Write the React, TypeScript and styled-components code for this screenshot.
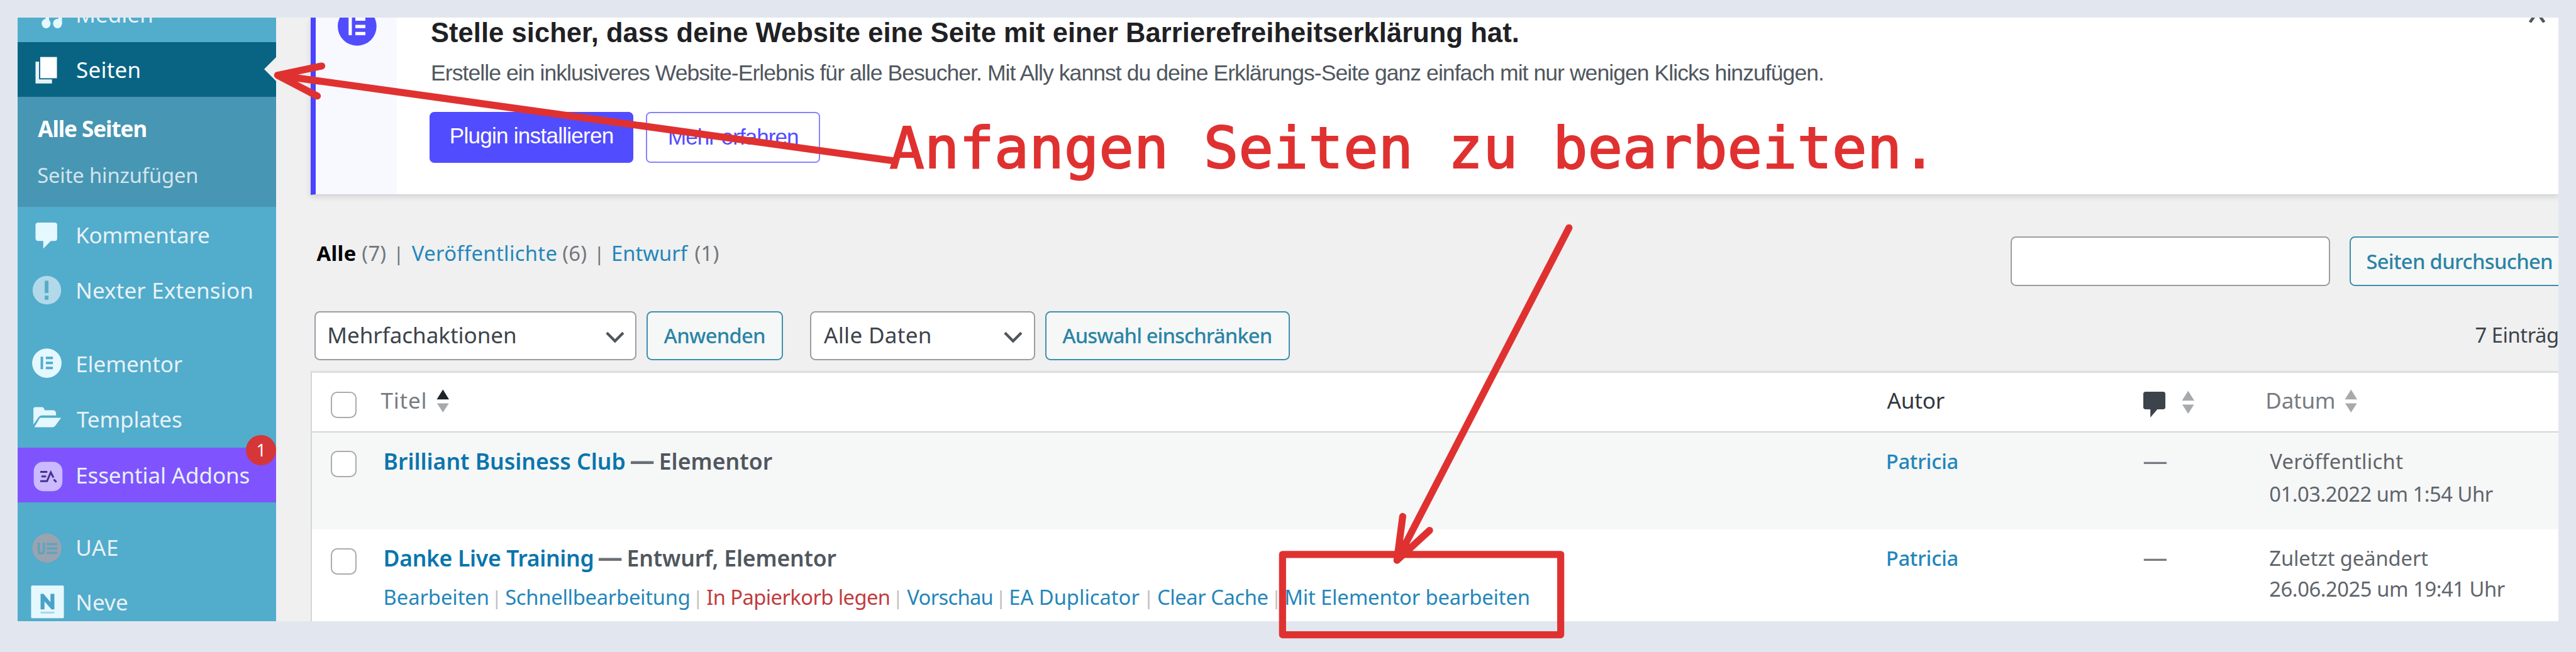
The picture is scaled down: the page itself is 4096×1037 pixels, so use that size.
import React, { useMemo } from 'react';
import styled, { createGlobalStyle, css } from 'styled-components';

/* One design unit in CSS pixels: the board is 4380 units wide. */
const UNIT = 4096 / 4380;
const u = (n: number) => `${+(n * UNIT).toFixed(3)}px`;

const UI = '"Noto Sans", "Open Sans", sans-serif';
const SANS = '"Liberation Sans", Arial, sans-serif';
const HAND = '"DejaVu Sans Mono", monospace';

const color = {
  board: '#e2e7ef',
  menu: '#52accc',
  menuText: '#e8f2f6',
  menuIcon: '#e5f8ff',
  current: '#096484',
  submenu: '#4796b3',
  purple: '#7f54ff',
  badge: '#d63638',
  page: '#f0f0f0',
  brand: '#524cff',
  link: '#2486ba',
  titleLink: '#0a75ad',
  line: '#d3d5d8',
  field: '#9a9da3',
  button: '#2a84a6',
  text: '#3c434a',
  muted: '#50575e',
  marker: '#e03131',
};

const GlobalStyle = createGlobalStyle`
  * { box-sizing: border-box; }
  html, body { margin: 0; padding: 0; }
  body { background: ${color.board}; overflow: hidden; }
`;

/* ---------- text set to a measured width ---------- */

const Box = styled.span<{ $w: number; $size: number; $weight: number; $color: string; $family: string }>`
  display: inline-block;
  flex: none;
  width: ${p => u(p.$w)};
  font-family: ${p => p.$family};
  font-size: ${p => u(p.$size)};
  font-weight: ${p => p.$weight};
  color: ${p => p.$color};
  line-height: ${u(50)};
  white-space: nowrap;
  font-variant-ligatures: none;
`;

const Glyphs = styled.span`
  display: inline-block;
`;

let pen: CanvasRenderingContext2D | null = null;

type LabelProps = {
  children: string;
  w: number;
  size?: number;
  weight?: number;
  tone?: string;
  family?: string;
};

function Label({ children, w, size = 35, weight = 400, tone = color.text, family = UI }: LabelProps) {
  const fit = useMemo(() => {
    pen = pen || document.createElement('canvas').getContext('2d');
    if (!pen) return {};
    pen.font = `${weight} ${size * UNIT}px ${family}`;
    const m = pen.measureText(children);
    const ink = m.actualBoundingBoxLeft + m.actualBoundingBoxRight;
    const stem = m.actualBoundingBoxLeft < -1.5 ? 1.6 : 0.4;
    return {
      letterSpacing: `${(w * UNIT - stem - ink) / Math.max(1, children.length - 1)}px`,
      marginLeft: `${m.actualBoundingBoxLeft + stem}px`,
    };
  }, [children, w, size, weight, family]);
  return (
    <Box $w={w} $size={size} $weight={weight} $color={tone} $family={family}>
      <Glyphs style={fit}>{children}</Glyphs>
    </Box>
  );
}

/* ---------- board ---------- */

const Board = styled.div`
  position: relative;
  width: 4096px;
  height: 1037px;
  padding: ${u(30)};
  background: ${color.board};
  overflow: hidden;
`;

const Shot = styled.div`
  display: flex;
  width: ${u(4320)};
  height: ${u(1026.4)};
  overflow: hidden;
  background: ${color.page};
`;

/* ---------- side menu ---------- */

const Menu = styled.nav`
  flex: none;
  width: ${u(439.5)};
  height: 100%;
  background: ${color.menu};
`;

const MenuScroll = styled.div`
  margin-top: ${u(-52)};
`;

const MenuItem = styled.div<{ $bg?: string; $h?: number; $gap?: number }>`
  position: relative;
  display: flex;
  align-items: center;
  gap: ${u(20)};
  height: ${p => u(p.$h || 94)};
  margin-top: ${p => u(p.$gap || 0)};
  padding: ${u(1)} 0 0 ${u(22)};
  background: ${p => p.$bg || 'transparent'};
`;

const MenuIcon = styled.svg`
  flex: none;
  width: ${u(58)};
  height: ${u(94)};
  margin-top: ${u(-1)};
`;

const Notch = styled.span`
  position: absolute;
  right: 0;
  top: ${u(25)};
  border: ${u(20.5)} solid transparent;
  border-right-color: ${color.page};
  border-left-width: 0;
`;

const Submenu = styled.div`
  display: flex;
  flex-direction: column;
  height: ${u(187)};
  padding: ${u(30)} 0 0 ${u(34)};
  gap: ${u(29)};
  background: ${color.submenu};
`;

const Badge = styled.span`
  position: absolute;
  right: 0;
  top: ${u(-21)};
  display: flex;
  align-items: center;
  justify-content: center;
  width: ${u(51)};
  height: ${u(51)};
  border-radius: 50%;
  background: ${color.badge};
  color: #fff;
  font: 400 ${u(29)} ${UI};
`;

const ic = color.menuIcon;

const MusicIcon = () => (
  <MenuIcon viewBox="0 0 58 94">
    <path d="M18 28h35v35h-6V36H31v27h-6V28z" fill={ic} />
    <ellipse cx="26" cy="62.5" rx="7.6" ry="8" fill={ic} />
    <ellipse cx="45.4" cy="62.5" rx="7.6" ry="8" fill={ic} />
  </MenuIcon>
);
const PagesIcon = () => (
  <MenuIcon viewBox="0 0 58 93">
    <path d="M8 32.6h6v30.2h22v7H8z" fill="#e8f3f7" />
    <path d="M16 24.8h28.4v36.1H16z" fill="#fff" />
  </MenuIcon>
);
const CommentIcon = () => (
  <MenuIcon viewBox="0 0 58 94">
    <path d="M12.500 25.600h28a4.300 4.300 0 0 1 4.300 4.300v22.800a4.300 4.300 0 0 1-4.300 4.300H34L21.200 70V57h-8.700A4.300 4.300 0 0 1 8 52.700V29.900a4.300 4.300 0 0 1 4.500-4.300z" fill={ic} />
  </MenuIcon>
);
const NexterIcon = () => (
  <MenuIcon viewBox="0 0 58 94">
    <circle cx="27.300" cy="46.600" r="24.300" fill="#b1d9ea" />
    <path d="M23.600 30.500h6.400v20.800h-6.400zM23.600 56h6.400v6.800h-6.400z" fill="#58abc9" />
  </MenuIcon>
);
const ElementorIcon = () => (
  <MenuIcon viewBox="0 0 58 94">
    <circle cx="27.300" cy="45.500" r="25" fill={ic} />
    <path d="M16.600 34.400h4.300v21.500h-4.300zM25.500 34.400h12.100v4.300H25.500zM25.500 43h12.100v4.300H25.500zM25.500 51.600h12.100v4.300H25.500z" fill={color.menu} />
  </MenuIcon>
);
const FolderIcon = () => (
  <MenuIcon viewBox="0 0 58 94">
    <path d="M4.400 56V29.500q0-3.400 3.400-3.400h10.800q4 0 5 5.500h14q5 0 5.300 5.500v3.300H19q-4 0-6.600 4z" fill={ic} />
    <path d="M15.500 44.300H51.500L41.500 58q-1.700 2.400-4.500 2.400H6z" fill={ic} />
  </MenuIcon>
);
const EssentialIcon = () => (
  <MenuIcon viewBox="0 0 58 94">
    <rect x="5" y="24" width="48.700" height="50" rx="16" fill="#cbbaff" />
    <g fill="none" stroke="#45308f" strokeWidth="3.200">
      <path d="M16 41.300h12M18 49h8M16 57h11.500L34 42l4.500 9" />
      <path d="M39 54l4.500 4.500" />
    </g>
  </MenuIcon>
);
const UaeIcon = () => (
  <MenuIcon viewBox="0 0 58 94">
    <circle cx="27.300" cy="47.800" r="24.800" fill="#9aa3b0" />
    <g fill="none" stroke="#62a3be" strokeWidth="4">
      <path d="M13.500 38.500v14q0 4.500 4.300 4.500t4.300-4.500v-14" />
      <path d="M27 41h18M27 48.500h18M27 56h18" />
    </g>
  </MenuIcon>
);
const NeveIcon = () => (
  <MenuIcon viewBox="0 0 58 94">
    <rect x="0.500" y="18.400" width="55.700" height="55.700" rx="2" fill={ic} />
    <path d="M16.600 59.100V32.700h5l11.800 14V32.700h6.700v26.400h-5L23.300 45.500v13.600z" fill="#48a3c6" />
    <path d="M16.600 63h23.500v3H16.600z" fill="#a5d6e8" />
  </MenuIcon>
);

function MenuLabel({ children, w }: { children: string; w: number }) {
  return <Label w={w} size={37.5} tone={color.menuText}>{children}</Label>;
}

function SideMenu() {
  return (
    <Menu>
      <MenuScroll>
        <MenuItem><MusicIcon /><MenuLabel w={128}>Medien</MenuLabel></MenuItem>
        <MenuItem $bg={color.current} $h={93}>
          <PagesIcon />
          <Label w={107} size={37.5} tone="#fff">Seiten</Label>
          <Notch />
        </MenuItem>
        <Submenu>
          <Label w={184.6} size={37.5} weight={700} tone="#fff">Alle Seiten</Label>
          <Label w={271} tone="#d3e5ec">Seite hinzufügen</Label>
        </Submenu>
        <MenuItem $gap={1}><CommentIcon /><MenuLabel w={225}>Kommentare</MenuLabel></MenuItem>
        <MenuItem><NexterIcon /><MenuLabel w={298}>Nexter Extension</MenuLabel></MenuItem>
        <MenuItem $gap={31}><ElementorIcon /><MenuLabel w={180}>Elementor</MenuLabel></MenuItem>
        <MenuItem><FolderIcon /><MenuLabel w={179}>Templates</MenuLabel></MenuItem>
        <MenuItem $gap={1} $bg={color.purple}>
          <EssentialIcon />
          <MenuLabel w={294}>Essential Addons</MenuLabel>
          <Badge>1</Badge>
        </MenuItem>
        <MenuItem $gap={29}><UaeIcon /><MenuLabel w={70}>UAE</MenuLabel></MenuItem>
        <MenuItem><NeveIcon /><MenuLabel w={86}>Neve</MenuLabel></MenuItem>
      </MenuScroll>
    </Menu>
  );
}

/* ---------- notice ---------- */

const Content = styled.main`
  flex: 1;
  min-width: 0;
  padding-left: ${u(59)};
`;

const Notice = styled.section`
  display: flex;
  height: ${u(301)};
  background: #fff;
  border-left: ${u(9)} solid #4a43ff;
  border-bottom: ${u(2)} solid #d0d3d7;
  box-shadow: 0 ${u(4)} ${u(10)} rgba(0, 0, 0, 0.13);
`;

const NoticeAside = styled.div`
  flex: none;
  width: ${u(137.5)};
  background: #f8f8ff;
`;

const NoticeLogo = styled.svg`
  display: block;
  margin: ${u(-18)} 0 0 ${u(37.4)};
  width: ${u(66)};
  height: ${u(66)};
`;

const NoticeBody = styled.div`
  flex: 1;
  display: flex;
  flex-direction: column;
  padding: ${u(1)} 0 0 ${u(58.5)};
`;

const NoticeText = styled.div`
  height: ${u(50)};
  margin-top: ${u(18.7)};
`;

const NoticeTitle = styled.div`
  height: ${u(50)};
`;

const Actions = styled.div`
  display: flex;
  gap: ${u(22)};
  margin: ${u(40.4)} 0 0 ${u(-2.5)};
`;

const NoticeButton = styled.button<{ $w: number; $solid?: boolean }>`
  display: flex;
  align-items: center;
  justify-content: center;
  width: ${p => u(p.$w)};
  height: ${u(86.5)};
  padding: 0 0 ${p => u(p.$solid ? 4 : 0)};
  border: ${u(2.8)} solid ${p => (p.$solid ? color.brand : '#8782ff')};
  border-radius: ${u(8)};
  background: ${p => (p.$solid ? color.brand : '#fff')};
`;

const Dismiss = styled.svg`
  flex: none;
  width: ${u(28)};
  height: ${u(8)};
  margin-right: ${u(22)};
`;

function AllyNotice() {
  return (
    <Notice>
      <NoticeAside>
        <NoticeLogo viewBox="0 0 66 66">
          <circle cx="33" cy="33" r="33" fill={color.brand} />
          <path d="M18.500 18h5.500v30h-5.500zM30 18h17v5.500H30zM30 30.500h17V36H30zM30 42.500h17V48H30z" fill="#fff" />
        </NoticeLogo>
      </NoticeAside>
      <NoticeBody>
        <NoticeTitle>
          <Label w={1848} size={46.5} weight={700} tone="#1f2124" family={SANS}>
            Stelle sicher, dass deine Website eine Seite mit einer Barrierefreiheitserklärung hat.
          </Label>
        </NoticeTitle>
        <NoticeText>
          <Label w={2368} size={38} tone="#50575e" family={SANS}>
            Erstelle ein inklusiveres Website-Erlebnis für alle Besucher. Mit Ally kannst du deine Erklärungs-Seite ganz einfach mit nur wenigen Klicks hinzufügen.
          </Label>
        </NoticeText>
        <Actions>
          <NoticeButton $w={346} $solid>
            <Label w={277.5} size={37.5} tone="#fff" family={SANS}>Plugin installieren</Label>
          </NoticeButton>
          <NoticeButton $w={296}>
            <Label w={221} size={37.5} tone={color.brand} family={SANS}>Mehr erfahren</Label>
          </NoticeButton>
        </Actions>
      </NoticeBody>
      <Dismiss viewBox="0 0 28 8">
        <path d="M2 8L9 -2M26 8L19 -2" stroke="#50575e" strokeWidth="5" fill="none" />
      </Dismiss>
    </Notice>
  );
}

/* ---------- list controls ---------- */

const TopBar = styled.div`
  display: flex;
  justify-content: space-between;
  align-items: flex-start;
  height: ${u(85)};
  margin-top: ${u(71)};
`;

const Views = styled.div`
  display: flex;
  padding: ${u(4.6)} 0 0 ${u(9.4)};
  gap: ${u(11)};
`;

const ViewBar = styled.span`
  width: ${u(22)};
  text-align: center;
  font: 400 ${u(34)}/${u(50)} ${UI};
  color: #72777c;
`;

const Search = styled.div`
  display: flex;
  flex: none;
  gap: ${u(33.2)};
  width: ${u(931.7)};
`;

const control = css`
  flex: none;
  border-radius: ${u(9)};
  border: ${u(2.8)} solid ${color.field};
  background: #fff;
`;

const SearchInput = styled.input`
  ${control}
  width: ${u(543.3)};
  height: ${u(85)};
`;

const Button = styled.button<{ $w: number; $h?: number }>`
  ${control}
  display: flex;
  align-items: center;
  width: ${p => u(p.$w)};
  height: ${p => u(p.$h || 83.5)};
  padding: ${u(1.5)} 0 0 ${u(27)};
  border-color: #3f8fac;
  background: #f6f7f7;
`;

const Filters = styled.div`
  display: flex;
  align-items: center;
  height: ${u(83.5)};
  margin-top: ${u(41.9)};
  padding-left: ${u(6.2)};
  gap: ${u(16.5)};
`;

const Select = styled.div<{ $w: number; $left?: number }>`
  ${control}
  display: flex;
  align-items: center;
  justify-content: space-between;
  width: ${p => u(p.$w)};
  height: ${u(83.5)};
  margin-left: ${p => u(p.$left || 0)};
  padding: 0 ${u(18)} 0 ${u(21)};
`;

const Chevron = styled.svg`
  width: ${u(34)};
  height: ${u(20)};
  margin-top: ${u(6)};
`;

const Count = styled.div`
  margin-left: auto;
  padding-right: ${u(1)};
`;

const Arrow = () => (
  <Chevron viewBox="0 0 34 20">
    <path d="M3 2.500L17 16.500L31 2.500" fill="none" stroke="#50555b" strokeWidth="4.600" />
  </Chevron>
);

function ListControls() {
  return (
    <>
      <TopBar>
        <Views>
          <Label w={67} weight={700} tone="#000">Alle</Label>
          <Label w={40} tone="#72777c">(7)</Label>
          <ViewBar>|</ViewBar>
          <Label w={246} tone={color.link}>Veröffentlichte</Label>
          <Label w={40} tone="#72777c">(6)</Label>
          <ViewBar>|</ViewBar>
          <Label w={130} tone={color.link}>Entwurf</Label>
          <Label w={40} tone="#72777c">(1)</Label>
        </Views>
        <Search>
          <SearchInput />
          <Button $w={385} $h={85}>
            <Label w={314.5} tone={color.button} weight={500}>Seiten durchsuchen</Label>
          </Button>
        </Search>
      </TopBar>
      <Filters>
        <Select $w={548}>
          <Label w={318} size={37.5}>Mehrfachaktionen</Label>
          <Arrow />
        </Select>
        <Button $w={232.6}>
          <Label w={171} tone={color.button} weight={500}>Anwenden</Label>
        </Button>
        <Select $w={383} $left={29}>
          <Label w={181} size={37.5}>Alle Daten</Label>
          <Arrow />
        </Select>
        <Button $w={416.7}>
          <Label w={355} tone={color.button} weight={500}>Auswahl einschränken</Label>
        </Button>
        <Count><Label w={140}>7 Einträg</Label></Count>
      </Filters>
    </>
  );
}

/* ---------- table ---------- */

const Table = styled.div`
  margin-top: ${u(18.9)};
  border-left: ${u(2.7)} solid ${color.line};
  border-top: ${u(4)} solid #dcdddf;
  background: #fff;
`;

const Row = styled.div<{ $h: number; $bg?: string; $head?: boolean }>`
  display: grid;
  grid-template-columns: ${u(116.4)} ${u(2561.2)} ${u(436.4)} ${u(209)} 1fr;
  align-items: start;
  height: ${p => u(p.$h)};
  background: ${p => p.$bg || '#fff'};
  border-bottom: ${p => (p.$head ? u(3) : '0')} solid ${color.line};
`;

const Cell = styled.div<{ $top: number; $left?: number }>`
  display: flex;
  align-items: center;
  padding: ${p => u(p.$top)} 0 0 ${p => u(p.$left || 0)};
`;

const Stack = styled.div<{ $top: number; $left: number; $gap: number }>`
  display: flex;
  flex-direction: column;
  padding: ${p => u(p.$top)} 0 0 ${p => u(p.$left)};
  gap: ${p => u(p.$gap)};
`;

const Line = styled.div`
  display: flex;
  height: ${u(50)};
`;

const Checkbox = styled.span`
  width: ${u(44)};
  height: ${u(45)};
  margin: ${u(31.5)} 0 0 ${u(31.7)};
  border: ${u(2.8)} solid #a9abaf;
  border-radius: ${u(11)};
  background: #fff;
`;

const SortSvg = styled.svg<{ $left: number }>`
  width: ${u(22)};
  height: ${u(40)};
  margin: ${u(1)} 0 0 ${p => u(p.$left)};
`;

const Sort = ({ left, active }: { left: number; active?: boolean }) => (
  <SortSvg $left={left} viewBox="0 0 22 40">
    <path d="M0.500 17.500L11 0.500L21.500 17.500z" fill={active ? '#1d2327' : '#a7aaad'} />
    <path d="M1 24L11 39.500L21 24z" fill="#a7aaad" />
  </SortSvg>
);

const CommentSvg = styled.svg`
  width: ${u(38)};
  height: ${u(46)};
  margin-top: ${u(8)};
`;

const Dash = styled.span<{ $bold?: boolean }>`
  width: ${p => u(p.$bold ? 59.5 : 40)};
  margin-left: ${p => u(p.$bold ? 0 : -1)};
  text-align: center;
  font: ${p => (p.$bold ? 700 : 400)} ${u(42)}/${u(46)} ${UI};
  color: ${p => (p.$bold ? '#6a6f75' : '#787c82')};
`;

const ActionBar = styled.span`
  width: ${u(30)};
  text-align: center;
  font: 400 ${u(34)}/${u(50)} ${UI};
  color: #c3c0bf;
`;

type PageRow = {
  title: string;
  titleW: number;
  state: string;
  stateW: number;
  date: [string, number][];
  dateTop: number;
  dateGap: number;
  actions?: [string, number][];
};

const pages: PageRow[] = [
  {
    title: 'Brilliant Business Club', titleW: 409, state: 'Elementor', stateW: 191,
    date: [['Veröffentlicht', 227], ['01.03.2022 um 1:54 Uhr', 380.5]], dateTop: 24.5, dateGap: 5.6,
  },
  {
    title: 'Danke Live Training', titleW: 354.4, state: 'Entwurf, Elementor', stateW: 354.5,
    date: [['Zuletzt geändert', 270], ['26.06.2025 um 19:41 Uhr', 401]], dateTop: 24.9, dateGap: 2.5,
    actions: [
      ['Bearbeiten', 176.2], ['Schnellbearbeitung', 312.2], ['In Papierkorb legen', 310.2],
      ['Vorschau', 145.1], ['EA Duplicator', 221.1], ['Clear Cache', 187.3], ['Mit Elementor bearbeiten', 414],
    ],
  },
];

function PagesTable() {
  return (
    <Table>
      <Row $h={101} $head>
        <Checkbox />
        <Cell $top={22.5}>
          <Label w={76.5} size={37.5} tone="#787c82">Titel</Label>
          <Sort left={18.5} active />
        </Cell>
        <Cell $top={22.5}><Label w={98} size={37.5} tone="#32373c">Autor</Label></Cell>
        <Cell $top={22.5}>
          <CommentSvg viewBox="0 0 38 46">
            <path d="M4 1h29.500a4 4 0 0 1 4 4v22a4 4 0 0 1-4 4H24L12 45V31H4a4 4 0 0 1-4-4V5a4 4 0 0 1 4-4z" fill="#3c434a" />
          </CommentSvg>
          <Sort left={27} />
        </Cell>
        <Cell $top={22.5}>
          <Label w={114.5} size={37.5} tone="#787c82">Datum</Label>
          <Sort left={18.5} />
        </Cell>
      </Row>
      {pages.map((p, i) => (
        <Row key={p.title} $h={165} $bg={i % 2 ? '#fff' : '#f6f7f7'}>
          <Checkbox />
          <Stack $top={23.5} $left={6.3} $gap={17.4}>
            <Line>
              <Label w={p.titleW} size={38} weight={600} tone={color.titleLink}>{p.title}</Label>
              <Dash $bold>—</Dash>
              <Label w={p.stateW} size={38} weight={600} tone={color.muted}>{p.state}</Label>
            </Line>
            {p.actions && (
              <Line>
                {p.actions.map(([name, w], k) => (
                  <React.Fragment key={name}>
                    {k > 0 && <ActionBar>|</ActionBar>}
                    <Label w={w} tone={k === 2 ? '#c03c3e' : color.link}>{name}</Label>
                  </React.Fragment>
                ))}
              </Line>
            )}
          </Stack>
          <Cell $top={24.7}><Label w={120} tone={color.link} weight={500}>Patricia</Label></Cell>
          <Cell $top={24.7}><Dash>—</Dash></Cell>
          <Stack $top={p.dateTop} $left={5.5} $gap={p.dateGap}>
            {p.date.map(([t, w]) => <Label key={t} w={w} tone="#5f656b">{t}</Label>)}
          </Stack>
        </Row>
      ))}
    </Table>
  );
}

/* ---------- hand-drawn annotations over the page ---------- */

const Marks = styled.svg`
  position: absolute;
  inset: 0;
  width: 4096px;
  height: 1037px;
`;

const Remark = styled.div`
  position: absolute;
  left: ${u(1512.6)};
  top: ${u(192.4)};
  font: 400 ${u(98)}/${u(120)} ${HAND};
  letter-spacing: ${u(0.37)};
  -webkit-text-stroke: ${u(2.4)} ${color.marker};
  paint-order: stroke;
  color: ${color.marker};
  white-space: pre;
`;

export default function App() {
  return (
    <Board>
      <GlobalStyle />
      <Shot>
        <SideMenu />
        <Content>
          <AllyNotice />
          <ListControls />
          <PagesTable />
        </Content>
      </Shot>
      <Marks viewBox="0 0 4380 1109" preserveAspectRatio="none">
        <g fill="none" stroke={color.marker} strokeWidth="12" strokeLinecap="round" strokeLinejoin="round">
          <path d="M1519 273.500L472 128M547 112.300L472 128L539.500 163.300" />
          <path d="M2667.700 387.500L2375.300 953M2385 878.500L2375.300 953L2430.700 902.200" />
          <rect x="2180.700" y="943" width="473" height="136.700" />
        </g>
      </Marks>
      <Remark>Anfangen Seiten zu bearbeiten.</Remark>
    </Board>
  );
}
